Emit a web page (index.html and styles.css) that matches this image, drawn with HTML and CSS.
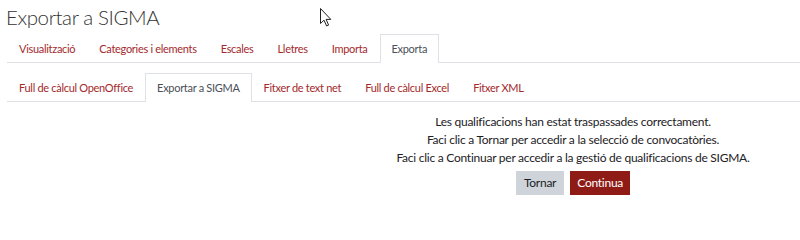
FILE: index.html
```html
<!DOCTYPE html>
<html lang="ca">
<head>
<meta charset="utf-8">
<title>Exportar a SIGMA</title>
<link rel="stylesheet" href="styles.css">
</head>
<body>
<div class="page">
  <h1 class="title">Exportar a SIGMA</h1>
  <ul class="tabs">
    <li class="tab"><a href="#">Visualització</a></li>
    <li class="tab"><a href="#">Categories i elements</a></li>
    <li class="tab"><a href="#">Escales</a></li>
    <li class="tab"><a href="#">Lletres</a></li>
    <li class="tab"><a href="#">Importa</a></li>
    <li class="tab active"><a href="#">Exporta</a></li>
  </ul>
  <ul class="tabs sub">
    <li class="tab"><a href="#">Full de càlcul OpenOffice</a></li>
    <li class="tab active"><a href="#">Exportar a SIGMA</a></li>
    <li class="tab"><a href="#">Fitxer de text net</a></li>
    <li class="tab"><a href="#">Full de càlcul Excel</a></li>
    <li class="tab"><a href="#">Fitxer XML</a></li>
  </ul>
  <div class="message">
    <p>Les qualificacions han estat traspassades correctament.</p>
    <p>Faci clic a Tornar per accedir a la selecció de convocatòries.</p>
    <p>Faci clic a Continuar per accedir a la gestió de qualificacions de SIGMA.</p>
    <div class="buttons">
      <button class="btn btn-secondary">Tornar</button>
      <button class="btn btn-primary">Continua</button>
    </div>
  </div>
</div>
<svg class="cursor" width="12" height="19" viewBox="0 0 12 19"><path d="M0.5 0.5 L0.5 15.5 L4 12.2 L6.6 18 L8.6 17.1 L6.1 11.4 L10.8 11.4 Z" fill="#fff" stroke="#222" stroke-width="1" stroke-linejoin="round"/></svg>
</body>
</html>
```
FILE: styles.css
```css
html, body {
  margin: 0;
  background: #fff;
}
body {
  font-family: Lato, "Open Sans", "Noto Sans", sans-serif;
  font-size: 12px;
  color: #1d2125;
  position: relative;
  width: 800px;
  height: 202px;
  overflow: hidden;
}
.page {
  padding-left: 7px;
}
.title {
  margin: 2px 0 0 -1px;
  font-size: 20.5px;
  letter-spacing: -0.4px;
  font-weight: 300;
  line-height: 30px;
  color: #333;
}
.tabs {
  list-style: none;
  margin: 2px 0 0 0;
  padding: 0;
  display: flex;
  border-bottom: 1px solid #dee2e6;
  font-size: 11px;
  letter-spacing: -0.3px;
}
.tabs.sub {
  margin-top: 10px;
}
.tab {
  margin-bottom: -1px;
}
.tab a {
  display: block;
  padding: 0 11px;
  height: 27px;
  line-height: 27px;
  border: 1px solid transparent;
  border-bottom: 0;
  color: #a3292c;
  text-decoration: none;
}
.tab.active a {
  color: #495057;
  background: #fff;
  border-color: #dee2e6;
  height: 28px;
}
.message {
  margin: 11px 0 0 339px;
  width: 454px;
  text-align: center;
  line-height: 18px;
  letter-spacing: -0.25px;
}
.message p {
  margin: 0;
}
.buttons {
  margin-top: 4px;
  display: flex;
  justify-content: center;
  gap: 6px;
}
.btn {
  font: inherit;
  letter-spacing: inherit;
  height: 24px;
  padding: 0 8px;
  border: 0;
  border-radius: 0;
}
.btn-secondary {
  background: #ced4da;
  color: #1d2125;
}
.btn-primary {
  background: #8f1b17;
  color: #fff;
  padding: 0 7px;
}
.cursor {
  position: absolute;
  left: 320px;
  top: 8px;
}
```
